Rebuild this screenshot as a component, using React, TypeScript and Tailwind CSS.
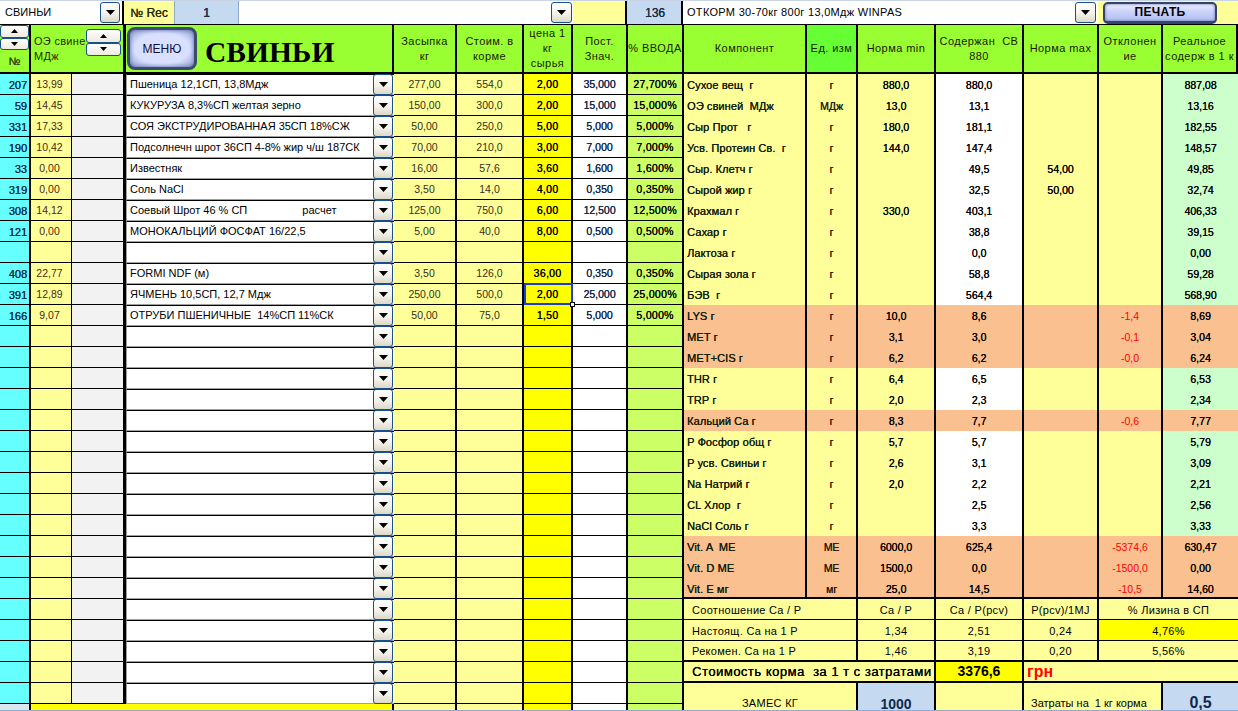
import React from "react";

const leftGrid = "grid grid-cols-[31px_41px_54px_268px_63px_67px_49px_55px_56px]";
const rightGrid = "grid grid-cols-[123px_51px_78px_88px_75px_64px_75px]";
const heavy = "[text-shadow:0.25px_0_0_currentColor]";

function Arrow({ small = false }: { small?: boolean }) {
  return (
    <svg width={small ? 7 : 9} height={small ? 4 : 5} viewBox="0 0 9 5" className="block">
      <path d="M0 0H9L4.5 5Z" fill="#000" />
    </svg>
  );
}

function Drop({ w = 20, h = 20 }: { w?: number; h?: number }) {
  return (
    <div
      style={{ width: w, height: h }}
      className="relative z-10 flex shrink-0 items-center justify-center rounded-[3px] border border-[#17508f] bg-[linear-gradient(#ffffff,#f4f2ea_55%,#ddd8c8)]"
    >
      <Arrow />
    </div>
  );
}

function Spin({ cls }: { cls: string }) {
  return (
    <div className={`flex flex-col ${cls}`}>
      <div className="flex h-1/2 items-center justify-center rounded-[3px] border border-[#17508f] bg-[linear-gradient(#ffffff,#eeeade)]">
        <svg width="7" height="4" viewBox="0 0 7 4"><path d="M0 4H7L3.5 0Z" fill="#000" /></svg>
      </div>
      <div className="flex h-1/2 items-center justify-center rounded-[3px] border border-[#17508f] bg-[linear-gradient(#ffffff,#eeeade)]">
        <Arrow small />
      </div>
    </div>
  );
}

const rows: [string, string, string, string, string, string, string, string][] = [
  ["207", "13,99", "Пшеница 12,1СП, 13,8Мдж", "277,00", "554,0", "2,00", "35,000", "27,700%"],
  ["59", "14,45", "КУКУРУЗА 8,3%СП желтая зерно", "150,00", "300,0", "2,00", "15,000", "15,000%"],
  ["331", "17,33", "СОЯ ЭКСТРУДИРОВАННАЯ 35СП 18%СЖ", "50,00", "250,0", "5,00", "5,000", "5,000%"],
  ["190", "10,42", "Подсолнечн шрот 36СП 4-8% жир ч/ш 187СК", "70,00", "210,0", "3,00", "7,000", "7,000%"],
  ["33", "0,00", "Известняк", "16,00", "57,6", "3,60", "1,600", "1,600%"],
  ["319", "0,00", "Соль NaCl", "3,50", "14,0", "4,00", "0,350", "0,350%"],
  ["308", "14,12", "Соевый Шрот 46 % СП                  расчет", "125,00", "750,0", "6,00", "12,500", "12,500%"],
  ["121", "0,00", "МОНОКАЛЬЦИЙ ФОСФАТ 16/22,5", "5,00", "40,0", "8,00", "0,500", "0,500%"],
  ["", "", "", "", "", "", "", ""],
  ["408", "22,77", "FORMI NDF (м)", "3,50", "126,0", "36,00", "0,350", "0,350%"],
  ["391", "12,89", "ЯЧМЕНЬ 10,5СП, 12,7 Мдж", "250,00", "500,0", "2,00", "25,000", "25,000%"],
  ["166", "9,07", "ОТРУБИ ПШЕНИЧНЫЕ  14%СП 11%СК", "50,00", "75,0", "1,50", "5,000", "5,000%"],
];
while (rows.length < 30) rows.push(["", "", "", "", "", "", "", ""]);

type R = [string, string, string, string, string, string, string, boolean];
const right: R[] = [
  ["Сухое вещ  г", "г", "880,0", "880,0", "", "", "887,08", false],
  ["ОЭ свиней  МДж", "МДж", "13,0", "13,1", "", "", "13,16", false],
  ["Сыр Прот   г", "г", "180,0", "181,1", "", "", "182,55", false],
  ["Усв. Протеин Св.  г", "г", "144,0", "147,4", "", "", "148,57", false],
  ["Сыр. Клетч г", "г", "", "49,5", "54,00", "", "49,85", false],
  ["Сырой жир г", "г", "", "32,5", "50,00", "", "32,74", false],
  ["Крахмал г", "г", "330,0", "403,1", "", "", "406,33", false],
  ["Сахар г", "г", "", "38,8", "", "", "39,15", false],
  ["Лактоза г", "г", "", "0,0", "", "", "0,00", false],
  ["Сырая зола г", "г", "", "58,8", "", "", "59,28", false],
  ["БЭВ  г", "г", "", "564,4", "", "", "568,90", false],
  ["LYS г", "г", "10,0", "8,6", "", "-1,4", "8,69", true],
  ["MET г", "г", "3,1", "3,0", "", "-0,1", "3,04", true],
  ["MET+CIS г", "г", "6,2", "6,2", "", "-0,0", "6,24", true],
  ["THR г", "г", "6,4", "6,5", "", "", "6,53", false],
  ["TRP г", "г", "2,0", "2,3", "", "", "2,34", false],
  ["Кальций Ca г", "г", "8,3", "7,7", "", "-0,6", "7,77", true],
  ["P Фосфор общ г", "г", "5,7", "5,7", "", "", "5,79", false],
  ["P усв. Свиньи г", "г", "2,6", "3,1", "", "", "3,09", false],
  ["Na Натрий г", "г", "2,0", "2,2", "", "", "2,21", false],
  ["CL Хлор  г", "г", "", "2,5", "", "", "2,56", false],
  ["NaCl Соль г", "г", "", "3,3", "", "", "3,33", false],
  ["Vit. A  ME", "МЕ", "6000,0", "625,4", "", "-5374,6", "630,47", true],
  ["Vit. D ME", "МЕ", "1500,0", "0,0", "", "-1500,0", "0,00", true],
  ["Vit. E мг", "мг", "25,0", "14,5", "", "-10,5", "14,60", true],
];

const base = "flex items-center justify-center pt-[2px] border-r-2 border-black";

function H({ children, cls = "bg-[#99ff33]" }: { children: React.ReactNode; cls?: string }) {
  return (
    <div className={`flex items-center justify-center whitespace-pre border-r-2 border-black text-center text-[11px] leading-[15px] tracking-[0.45px] text-[#1a1a00] ${cls}`}>
      {children}
    </div>
  );
}

export default function App() {
  return (
    <div className="relative flex h-[711px] w-[1238px] flex-col overflow-hidden bg-white font-['Liberation_Sans',Arial,sans-serif] text-[10.5px] text-black">
      {/* top bar */}
      <div className="flex h-[25px] shrink-0 border-b border-black border-t border-t-[#c8d4e4]">
        <div className="flex w-[124px] items-center justify-between border-r-2 border-black bg-white pl-[5px] pr-[2px] text-[11px]">
          <span>СВИНЬИ</span>
          <Drop h={21} />
        </div>
        <div className={`flex w-[50px] items-center justify-center bg-[#ffff99] pt-px text-[12px] text-[#2a2a10] ${heavy}`}>№ Rec</div>
        <div className="flex w-[65px] items-center justify-center border-x border-[#8ea9c8] bg-[#c5d9f1] text-[12px] font-bold text-[#1a2a40]">1</div>
        <div className="flex w-[334px] items-center justify-end bg-white pr-px">
          <Drop w={21} h={21} />
        </div>
        <div className="w-[54px] border-r-2 border-black bg-[#ffff99]" />
        <div className={`flex w-[56px] items-center justify-center border-r-2 border-black bg-[#c5d9f1] pl-[2px] text-[12px] text-[#1a2a40] ${heavy}`}>136</div>
        <div className="flex w-[415px] items-center justify-between bg-white pl-[4px] pr-[2px] text-[11px] tracking-[0.3px]">
          <span>ОТКОРМ 30-70кг 800г 13,0Мдж WINPAS</span>
          <Drop w={21} h={21} />
        </div>
        <div className="flex flex-1 items-center bg-[#ffff99] pl-[5px]">
          <div className="flex h-[22px] w-[114px] items-center justify-center rounded-[5px] border-2 border-b-[3px] border-[#34446c] bg-[linear-gradient(#eef0ff,#c9d2fb_45%,#b4bfee)] text-[12px] font-bold tracking-[0.3px] shadow-[inset_0_0_3px_#5d6ea8]">
            ПЕЧАТЬ
          </div>
        </div>
      </div>

      <div className="flex min-h-0 flex-1">
        {/* left table */}
        <div className="flex w-[684px] flex-col">
          <div className={`${leftGrid} h-[49px] shrink-0 border-b-2 border-black`}>
            <div className="flex flex-col border-r-2 border-black bg-[#99ff33]">
              <Spin cls="h-[25px] w-[29px]" />
              <div className={`flex flex-1 items-center justify-center text-[11px] text-[#2a4a10] ${heavy}`}>№</div>
            </div>
            <div className="relative col-span-2 flex items-center border-r-[3px] border-black bg-[#99ff33] pl-[3px]">
              <div className="whitespace-pre-line text-[11px] leading-[15px] tracking-[0.3px] text-[#2a2a00]">{"ОЭ свине\nМДж"}</div>
              <Spin cls="absolute left-[55px] top-[4px] h-[27px] w-[35px]" />
            </div>
            <div className="flex items-center gap-[8px] border-r-2 border-black bg-[#99ff33] pl-[1px]">
              <div className="flex h-[43px] w-[70px] items-center justify-center rounded-[8px] border-[3px] border-[#3b4a70] bg-[radial-gradient(ellipse_at_center,#d8dfff_60%,#8f9ccd)] text-[12px] text-[#10103a] shadow-[inset_0_0_4px_#5d6ea8]">
                МЕНЮ
              </div>
              <div className="mt-[9px] font-['Liberation_Serif',serif] text-[29.5px] font-bold leading-none">СВИНЬИ</div>
            </div>
            <H>{"Засыпка\nкг"}</H>
            <H>{"Стоим. в\nкорме"}</H>
            <H>{"цена 1\nкг\nсырья"}</H>
            <H>{"Пост.\nЗнач."}</H>
            <H cls="bg-[#99ff33] tracking-[0.2px]">% ВВОДА</H>
          </div>
          {rows.map((r, i) => (
            <div key={i} className={`${leftGrid} h-[21px] shrink-0 grid-rows-[20px] border-b border-black`}>
              <div className={`flex items-center justify-end border-r-2 border-black bg-[#66ffff] pr-[2px] pt-[2px] text-[11px] text-[#10304a] ${heavy}`}>{r[0]}</div>
              <div className="flex items-center justify-center border-r border-black bg-[#ffff99] pr-[3px] pt-[2px] text-[#4a2a10]">{r[1]}</div>
              <div className="border-r-[3px] border-black bg-[#f2f2f2]" />
              <div className="flex h-[21px] items-center justify-between self-start border-b border-l border-t border-b-[#a0a0a0] border-l-[#a0a0a0] border-t-black bg-white pl-[3px] pr-px">
                <span className="whitespace-pre text-[11px]">{r[2]}</span>
                <Drop h={21} />
              </div>
              <div className={`${base} bg-[#ffff99] text-[#33301a]`}>{r[3]}</div>
              <div className={`${base} bg-[#ffff99] text-[#33301a]`}>{r[4]}</div>
              <div className={`${base} bg-[#ffff00] tracking-[0.3px] ${heavy}`}>{r[5]}</div>
              <div className={`${base} bg-white text-[#10284a] ${heavy}`}>{r[6]}</div>
              <div className={`${base} bg-[#ccff66] tracking-[0.3px] ${heavy}`}>{r[7]}</div>
            </div>
          ))}
          <div className={`${leftGrid} min-h-0 flex-1`}>
            <div className="border-r-2 border-black bg-[#dce6f1]" />
            <div className="col-span-3 border-r-2 border-black bg-[#ffff00]" />
            <div className="border-r-2 border-black bg-[#ffff99]" />
            <div className="border-r-2 border-black bg-[#ffff99]" />
            <div className="border-r-2 border-black bg-[#ffff00]" />
            <div className="border-r-2 border-black bg-white" />
            <div className="border-r-2 border-black bg-[#ccff66]" />
          </div>
        </div>

        {/* right table */}
        <div className="flex w-[554px] flex-col">
          <div className={`${rightGrid} h-[49px] shrink-0 border-b-2 border-black`}>
            <H>Компонент</H>
            <H cls="bg-[#66ff33] tracking-[0.2px]">Ед. изм</H>
            <H>Норма min</H>
            <H>{"Содержан  СВ\n880"}</H>
            <H>Норма max</H>
            <H>{"Отклонен\nие"}</H>
            <H cls="bg-[#99ff33] border-r-0 tracking-[0.3px]">{"Реальное\nсодерж в 1 к"}</H>
          </div>
          {right.map((r, i) => {
            const o = r[7];
            const c = o ? "bg-[#fac090]" : "bg-[#ffff99]";
            return (
              <div key={i} className={`${rightGrid} h-[21px] shrink-0`}>
                <div className={`flex items-center whitespace-pre border-r-2 border-black pl-[3px] pt-[2px] text-[11px] tracking-[0.1px] text-[#10200a] ${heavy} ${c}`}>{r[0]}</div>
                <div className={`${base} ${c} text-[#2a1a10] ${heavy}`}>{r[1]}</div>
                <div className={`${base} ${c} ${heavy}`}>{r[2]}</div>
                <div className={`${base} ${o ? "bg-[#fac090]" : "bg-white"} ${heavy}`}>{r[3]}</div>
                <div className={`${base} ${c} ${heavy}`}>{r[4]}</div>
                <div className={`${base} ${c} text-[#ff0000]`}>{r[5]}</div>
                <div className={`flex items-center justify-center pt-[2px] ${heavy} ${o ? "bg-[#fac090]" : "bg-[#ccffcc]"}`}>{r[6]}</div>
              </div>
            );
          })}
          <div className="-mt-[2px] grid min-h-0 flex-1 grid-cols-[174px_78px_88px_75px_139px] grid-rows-[21px_21px_21px_21px_28px] overflow-hidden border-t-2 border-black bg-[#ffff99] text-[11px] tracking-[0.3px]">
            <Lab>{"Соотношение Ca / P"}</Lab>
            <Val>Ca / P</Val>
            <Val>{"Ca / P(pcv)"}</Val>
            <Val>{"P(pcv)/1MJ"}</Val>
            <Val last>% Лизина в СП</Val>
            <Lab>Настоящ. Ca на 1 Р</Lab>
            <Val>1,34</Val>
            <Val>2,51</Val>
            <Val>0,24</Val>
            <Val last cls="bg-[#ffff00]">4,76%</Val>
            <Lab thick>Рекомен. Ca на 1 Р</Lab>
            <Val thick>1,46</Val>
            <Val thick>3,19</Val>
            <Val thick>0,20</Val>
            <Val last thick>5,56%</Val>
            <div className={`col-span-2 flex items-center whitespace-pre border-r-2 border-b-2 border-black pl-[8px] text-[13px] tracking-[0.5px] ${heavy}`}>
              Стоимость корма  за 1 т с затратами
            </div>
            <div className="flex items-center justify-center border-r-2 border-b-2 border-black bg-[#ffff00] text-[14px] font-bold tracking-normal">3376,6</div>
            <div className="col-span-2 flex items-center border-b-2 border-black pl-[3px] text-[16px] font-bold tracking-normal text-[#ff0000]">грн</div>
            <div className="flex items-center justify-center border-r-2 border-black pt-[13px] text-[11px] leading-none">ЗАМЕС КГ</div>
            <div className="flex items-center justify-center border-r-2 border-black bg-[#c5d9f1] pt-[13px] text-[14px] font-bold leading-none tracking-normal text-[#10284a]">1000</div>
            <div className="border-r-2 border-black" />
            <div className="col-span-2 flex">
              <div className="flex w-[139px] items-center whitespace-pre border-r-2 border-black pl-[7px] pt-[13px] text-[11px] leading-none tracking-normal">Затраты на  1 кг корма</div>
              <div className="flex flex-1 items-center justify-center bg-[#c5d9f1] pt-[11px] text-[16px] font-bold leading-none tracking-normal text-[#10284a]">0,5</div>
            </div>
          </div>
        </div>
      </div>
      <div className="h-px shrink-0 bg-[#8eaadb]" />

      {/* selected cell */}
      <div className="pointer-events-none absolute left-[524px] top-[283px] z-20 h-[22px] w-[49px] border-2 border-[#1a3fd0]" />
      <div className="pointer-events-none absolute left-[570px] top-[302px] z-20 h-[5px] w-[5px] border border-black bg-white" />
    </div>
  );
}

function Lab({ children, thick }: { children: React.ReactNode; thick?: boolean }) {
  return (
    <div className={`flex items-center whitespace-pre border-r-2 border-black pl-[8px] pt-[2px] ${thick ? "border-b-2" : "border-b"}`}>
      {children}
    </div>
  );
}

function Val({ children, last, thick, cls = "" }: { children: React.ReactNode; last?: boolean; thick?: boolean; cls?: string }) {
  return (
    <div className={`flex items-center justify-center whitespace-pre border-black pt-[2px] ${last ? "" : "border-r-2"} ${thick ? "border-b-2" : "border-b"} ${cls}`}>
      {children}
    </div>
  );
}
